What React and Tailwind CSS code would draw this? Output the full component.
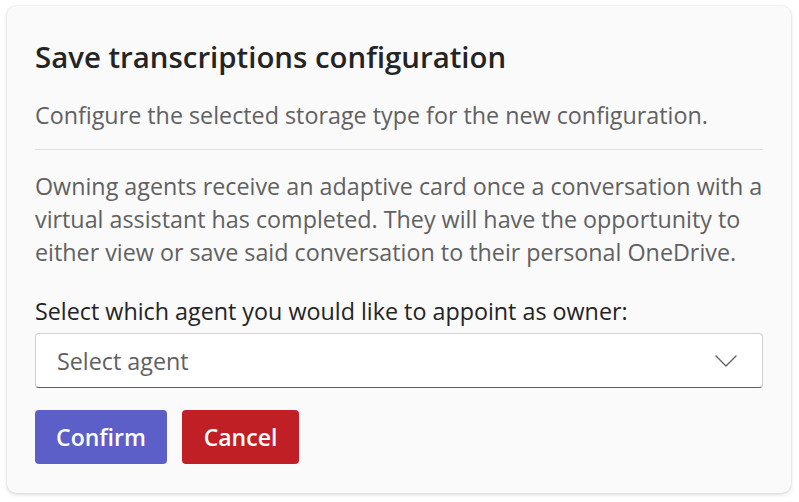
import React from "react";

const ChevronDown = () => (
  <svg width="22" height="22" viewBox="0 0 22 22" fill="none">
    <path d="M1 6 L11 16 L21 6" stroke="#616161" strokeWidth="1.4" strokeLinecap="round" strokeLinejoin="round" />
  </svg>
);

export default function App() {
  return (
    <div className="min-h-[502px] w-[799px] bg-white pl-[7px] pt-[6px] font-['Open_Sans',sans-serif]">
      <div className="w-[784px] h-[487px] rounded-[9px] bg-[#fafafa] shadow-[0_0_2px_rgba(0,0,0,0.14),0_2px_4px_rgba(0,0,0,0.12)] px-[28px] pt-[35px]">
        <h1 className="text-[29.4px] leading-[32px] font-semibold text-[#242424]">
          Save transcriptions configuration
        </h1>
        <p className="mt-[28px] text-[23.3px] leading-[28px] text-[#616161]">
          Configure the selected storage type for the new configuration.
        </p>
        <div className="mt-[20px] h-px bg-[#e0e0e0]" />
        <p className="mt-[20px] text-[23.3px] leading-[33px] text-[#616161]">
          Owning agents receive an adaptive card once a conversation with a
          virtual assistant has completed. They will have the opportunity to
          either view or save said conversation to their personal OneDrive.
        </p>
        <div className="mt-[28px] text-[23.3px] leading-[28px] text-[#242424]">
          Select which agent you would like to appoint as owner:
        </div>
        <div className="mt-[8px] h-[55px] flex items-center justify-between rounded-[4px] border border-[#d1d1d1] border-b-[#616161] bg-white pl-[21px] pr-[25px]">
          <span className="pt-[2px] text-[23.3px] text-[#616161]">Select agent</span>
          <ChevronDown />
        </div>
        <div className="mt-[22px] flex gap-[15px]">
          <button className="h-[54px] w-[132px] rounded-[4px] bg-[#5b5fc7] text-[23px] font-semibold text-white">
            Confirm
          </button>
          <button className="h-[54px] w-[117px] rounded-[4px] bg-[#c01f26] text-[23px] font-semibold text-white">
            Cancel
          </button>
        </div>
      </div>
    </div>
  );
}
